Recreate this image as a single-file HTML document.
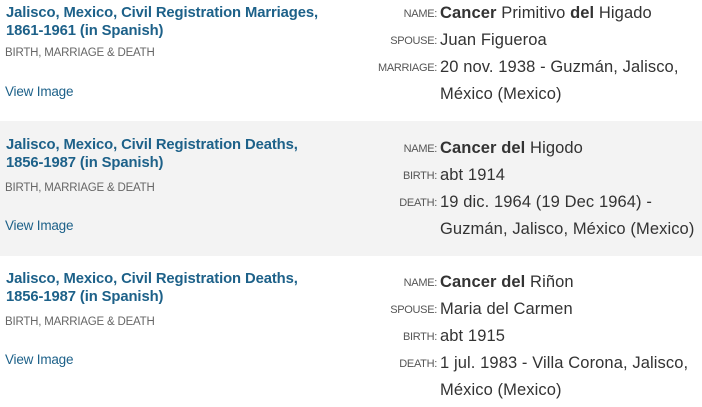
<!DOCTYPE html>
<html><head><meta charset="utf-8"><style>
html,body{margin:0;padding:0;width:702px;height:407px;overflow:hidden;background:#fff;font-family:"Liberation Sans",Arial,sans-serif;}
.row{position:absolute;left:0;width:702px;}
.g{background:#f3f3f3;}
.t{position:absolute;left:6px;color:#1d6189;font-weight:bold;font-size:14.8px;line-height:18px;letter-spacing:-0.1px;white-space:nowrap;}
.c{position:absolute;left:5px;color:#666;font-size:11.5px;letter-spacing:-0.2px;}
.v{position:absolute;left:5px;color:#1d6189;font-size:13.5px;letter-spacing:-0.2px;}
.l{position:absolute;right:265px;font-size:11px;color:#555;text-transform:uppercase;white-space:nowrap;letter-spacing:-0.3px;}
.d{position:absolute;left:440px;font-size:16.5px;color:#333;white-space:nowrap;letter-spacing:0.1px;}
</style></head><body>
<div class="row" style="top:0;height:121px">
<div class="t" style="top:4px">Jalisco, Mexico, Civil Registration Marriages,<br>1861-1961 (in Spanish)</div>
<div class="c" style="top:47px">BIRTH, MARRIAGE &amp; DEATH</div>
<div class="v" style="top:84px">View Image</div>
<div class="l" style="top:8px">Name:</div><div class="d" style="top:4px"><b>Cancer</b> Primitivo <b>del</b> Higado</div>
<div class="l" style="top:35px">Spouse:</div><div class="d" style="top:31px">Juan Figueroa</div>
<div class="l" style="top:62px">Marriage:</div><div class="d" style="top:58px">20 nov. 1938 - Guzmán, Jalisco,</div>
<div class="d" style="top:85px">México (Mexico)</div>
</div>
<div class="row g" style="top:121px;height:135px">
<div class="t" style="top:15px">Jalisco, Mexico, Civil Registration Deaths,<br>1856-1987 (in Spanish)</div>
<div class="c" style="top:61px">BIRTH, MARRIAGE &amp; DEATH</div>
<div class="v" style="top:97px">View Image</div>
<div class="l" style="top:22px">Name:</div><div class="d" style="top:18px"><b>Cancer del</b> Higodo</div>
<div class="l" style="top:49px">Birth:</div><div class="d" style="top:45px">abt 1914</div>
<div class="l" style="top:76px">Death:</div><div class="d" style="top:72px">19 dic. 1964 (19 Dec 1964) -</div>
<div class="d" style="top:99px">Guzmán, Jalisco, México (Mexico)</div>
</div>
<div class="row" style="top:256px;height:151px">
<div class="t" style="top:14px">Jalisco, Mexico, Civil Registration Deaths,<br>1856-1987 (in Spanish)</div>
<div class="c" style="top:60px">BIRTH, MARRIAGE &amp; DEATH</div>
<div class="v" style="top:96px">View Image</div>
<div class="l" style="top:21px">Name:</div><div class="d" style="top:17px"><b>Cancer del</b> Riñon</div>
<div class="l" style="top:48px">Spouse:</div><div class="d" style="top:44px">Maria del Carmen</div>
<div class="l" style="top:75px">Birth:</div><div class="d" style="top:71px">abt 1915</div>
<div class="l" style="top:102px">Death:</div><div class="d" style="top:98px">1 jul. 1983 - Villa Corona, Jalisco,</div>
<div class="d" style="top:125px">México (Mexico)</div>
</div>
</body></html>
